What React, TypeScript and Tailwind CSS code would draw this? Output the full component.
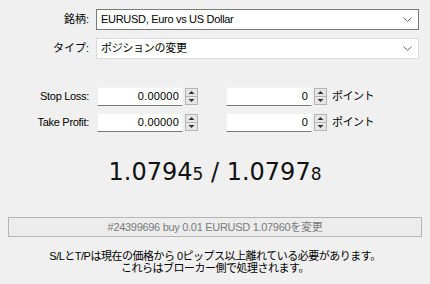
import React from "react";

const font = { fontFamily: '"Liberation Sans", "Noto Sans CJK JP", sans-serif' };

function Chevron() {
  return (
    <svg width="9" height="6" viewBox="0 0 9 6" className="shrink-0">
      <path d="M0.5 0.5 L4.5 4.5 L8.5 0.5" fill="none" stroke="#6a6a6a" strokeWidth="1" />
    </svg>
  );
}

function Select({ text, focused }: { text: string; focused?: boolean }) {
  return (
    <div
      className={`flex-1 h-[21px] bg-white border flex items-center pl-[4px] pr-[6px] ${
        focused ? "border-[#7a7a7a]" : "border-[#d9d9d9]"
      }`}
    >
      <span className="flex-1 tracking-[-0.3px] text-black">{text}</span>
      <Chevron />
    </div>
  );
}

function Spin() {
  return (
    <svg width="13" height="17" viewBox="0 0 13 17" className="shrink-0">
      <rect x="0.5" y="0.5" width="12" height="16" fill="#e6e6e6" stroke="#b4b4b4" />
      <line x1="1" y1="8.5" x2="12" y2="8.5" stroke="#b4b4b4" />
      <path d="M3.5 6 L6.5 3 L9.5 6 Z" fill="#333" />
      <path d="M3.5 11 L6.5 14 L9.5 11 Z" fill="#333" />
    </svg>
  );
}

function Input({ value }: { value: string }) {
  return (
    <div className="w-[86px] h-[19px] bg-white border border-[#f2f2f2] border-b-[#7a7a7a] flex items-center justify-end pr-[3px] tracking-[0.2px] text-black">
      {value}
    </div>
  );
}

function SLRow({ label }: { label: string }) {
  return (
    <div className="flex items-center h-[19px]">
      <div className="w-[89px] text-right tracking-[-0.3px] text-black">{label}</div>
      <div className="w-[8px]" />
      <Input value="0.00000" />
      <div className="w-[2px]" />
      <Spin />
      <div className="w-[28px]" />
      <Input value="0" />
      <div className="w-[2px]" />
      <Spin />
      <div className="w-[5px]" />
      <span className="tracking-[-0.5px] text-black">ポイント</span>
    </div>
  );
}

export default function App() {
  return (
    <div className="w-[430px] h-[284px] bg-[#f0f0f0] text-[11px] overflow-hidden" style={font}>
      <div className="pt-[9px] pr-[11px] flex flex-col gap-[8px]">
        <div className="flex items-center">
          <div className="w-[89px] text-right text-black">銘柄:</div>
          <div className="w-[7px]" />
          <Select text="EURUSD, Euro vs US Dollar" focused />
        </div>
        <div className="flex items-center">
          <div className="w-[89px] text-right text-black">タイプ:</div>
          <div className="w-[7px]" />
          <Select text="ポジションの変更" />
        </div>
      </div>
      <div className="mt-[28px] flex flex-col gap-[7px]">
        <SLRow label="Stop Loss:" />
        <SLRow label="Take Profit:" />
      </div>
      <div
        className="mt-[25px] h-[30px] flex items-baseline justify-center text-[#111] leading-[30px]"
        style={{ fontFamily: '"DejaVu Sans", sans-serif' }}
      >
        <span className="text-[24px]">1.0794</span>
        <span className="text-[17px]">5</span>
        <span className="text-[24px]">&nbsp;/ 1.0797</span>
        <span className="text-[17px]">8</span>
      </div>
      <div className="mt-[30px] mx-[8px] h-[20px] border border-[#b5b5b5] bg-[#ececec] flex items-center justify-center text-[#7a7a7a] tracking-[-0.3px]">
        #24399696 buy 0.01 EURUSD 1.07960を変更
      </div>
      <div className="mt-[13px] flex flex-col items-center leading-[12px] text-black tracking-[-0.5px]">
        <div>S/LとT/Pは現在の価格から 0ピップス以上離れている必要があります。</div>
        <div>これらはブローカー側で処理されます。</div>
      </div>
    </div>
  );
}
